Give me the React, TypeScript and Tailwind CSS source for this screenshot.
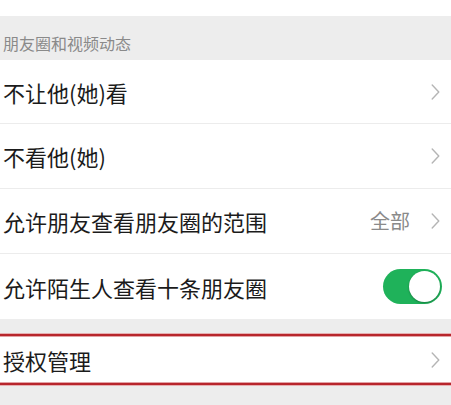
import React from "react";

const Chevron = () => (
  <svg width="9" height="16" viewBox="0 0 9 16" className="shrink-0">
    <polyline points="1.2,1 7.8,8 1.2,15" fill="none" stroke="#b5b5b5" strokeWidth="1.4" strokeLinecap="round" strokeLinejoin="round" />
  </svg>
);

const Row = ({ label, h, border = true, right }: { label: string; h: string; border?: boolean; right?: React.ReactNode }) => (
  <div className={`flex items-center justify-between bg-white pl-[3px] ${h} ${border ? "border-b border-[#ececec]" : ""}`}>
    <span className="text-[22px] text-[#1b1b1b] leading-none">{label}</span>
    {right}
  </div>
);

export default function App() {
  return (
    <div
      className="w-[451px] h-[405px] overflow-hidden bg-[#ededed] flex flex-col"
      style={{ fontFamily: '"Noto Sans CJK SC", "Noto Sans", sans-serif' }}
    >
      <div className="h-[16px] bg-white" />
      <div className="h-[44px] flex items-center pl-[3px] text-[16px] text-[#8a8a8a] leading-none pt-[9px]">朋友圈和视频动态</div>
      <Row label="不让他(她)看" h="h-[64px]" right={<div className="pr-[11px]"><Chevron /></div>} />
      <Row label="不看他(她)" h="h-[65px]" right={<div className="pr-[11px]"><Chevron /></div>} />
      <Row
        label="允许朋友查看朋友圈的范围"
        h="h-[65px]"
        right={
          <div className="flex items-center pr-[11px] gap-[21px]">
            <span className="text-[20px] text-[#8a8a8a] leading-none">全部</span>
            <Chevron />
          </div>
        }
      />
      <Row
        label="允许陌生人查看十条朋友圈"
        h="h-[65px]"
        border={false}
        right={
          <div className="pr-[9px]">
            <div className="w-[59px] h-[35px] rounded-full bg-[#1fb25a] flex items-center justify-end pr-[2px]">
              <div className="w-[31px] h-[31px] rounded-full bg-white shadow-[0_1px_2px_rgba(0,0,0,0.3)]" />
            </div>
          </div>
        }
      />
      <div className="h-[14px]" />
      <div className="flex flex-col">
        <div className="h-[1px] bg-[#e6b0b2]" />
        <div className="h-[2px] bg-[#b8262c]" />
        <div className="h-[1px] bg-[#e3a3a6]" />
      </div>
      <div className="h-[45px] bg-white flex items-center justify-between pl-[3px] pr-[11px]">
        <span className="text-[22px] text-[#1b1b1b] leading-none">授权管理</span>
        <Chevron />
      </div>
      <div className="flex flex-col">
        <div className="h-[1px] bg-[#e3a3a6]" />
        <div className="h-[2px] bg-[#b8262c]" />
        <div className="h-[1px] bg-[#e6b0b2]" />
      </div>
    </div>
  );
}
